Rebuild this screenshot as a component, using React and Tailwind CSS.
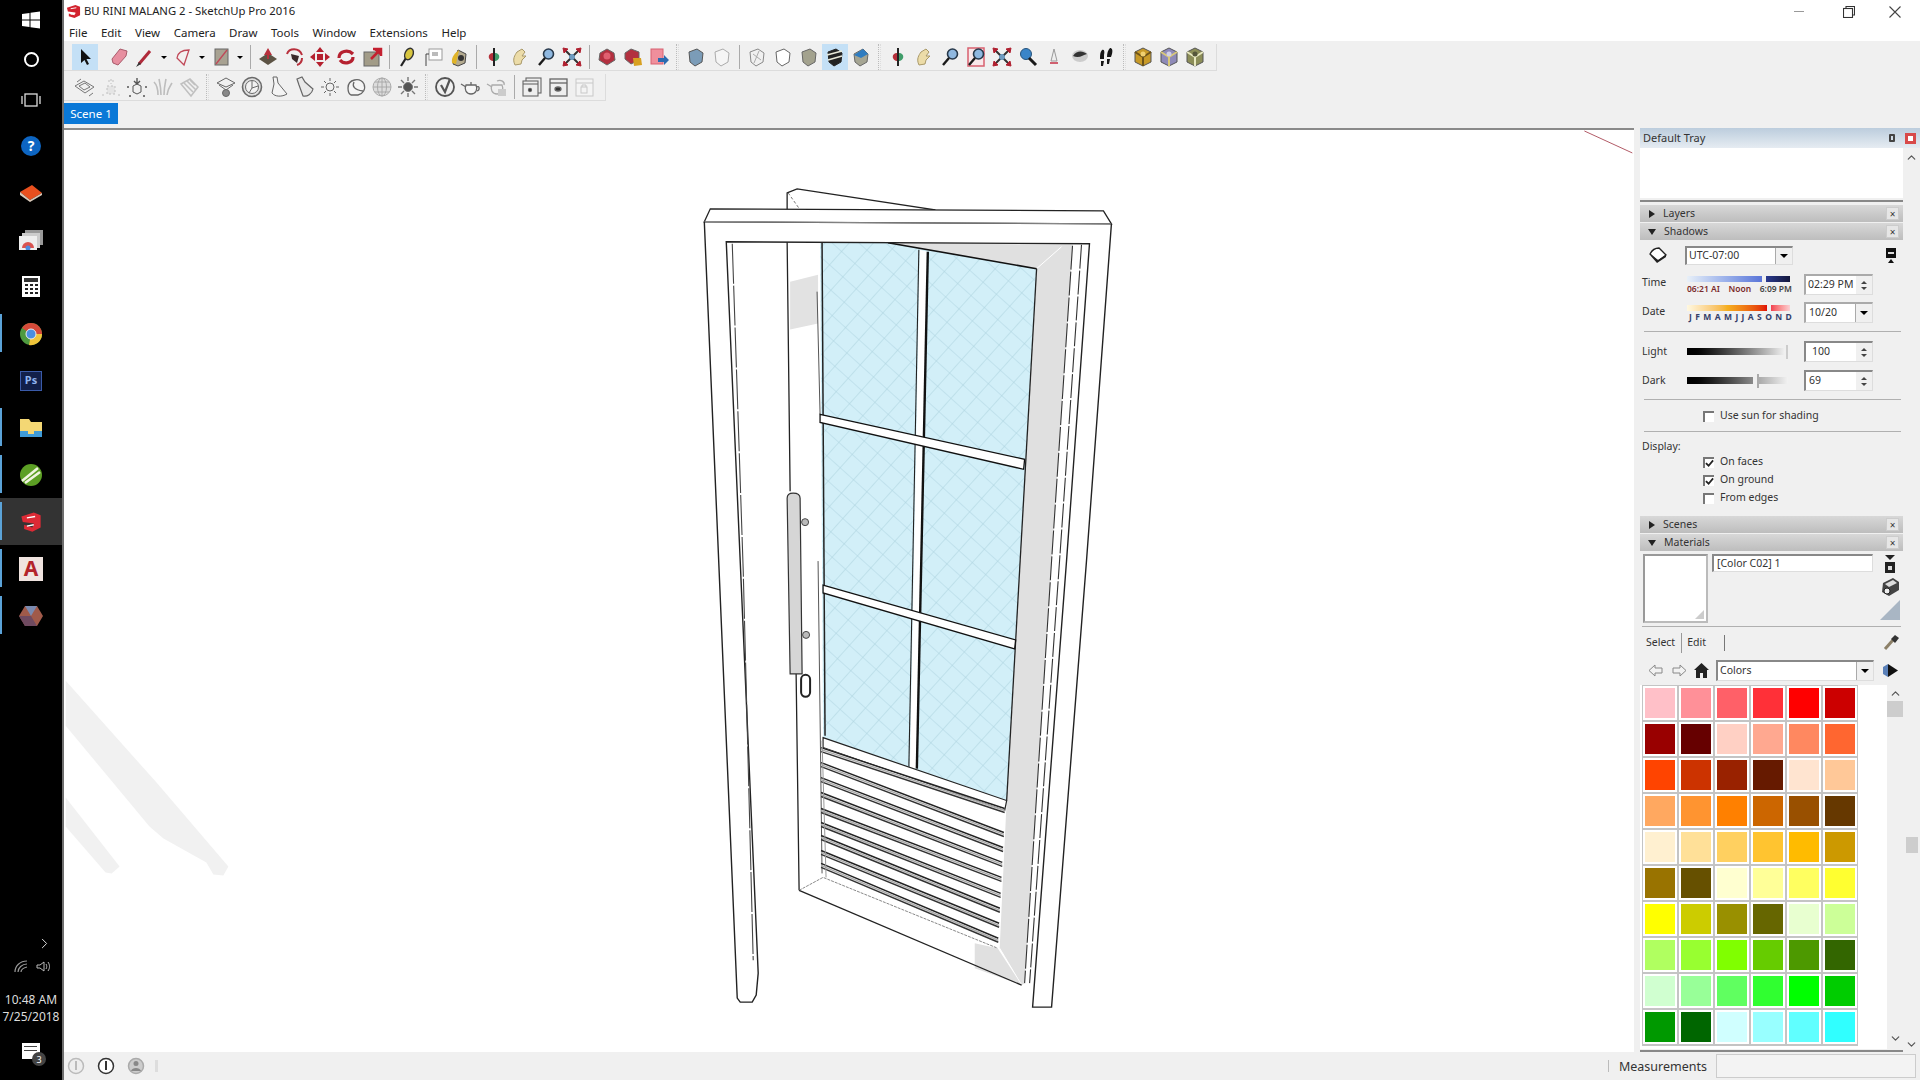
import React from 'react';
import { ChevronUp, ChevronDown, ChevronRight } from 'lucide-react';

const box = (fill, stroke = '#555', extra = null) => (
  <>
    <path d="M4 6 L12 3 L18 7 L17 16 L10 20 L5 16Z" fill={fill} stroke={stroke} />
    {extra}
  </>
);

const orbitIcon = (
  <>
    <path d="M11 7 C4 6 4 15 11 15Z" fill="#b5303a" />
    <path d="M11 7 C18 6 18 15 11 15Z" fill="#3f9d6a" />
    <path d="M11 2 V20" stroke="#222" strokeWidth="2" />
  </>
);
const panIcon = <path d="M6 19 C3 13 6 9 8 6 L13 3 L16 6 L13 10 L17 10 L13 14 L12 18 Z" fill="#ecdca8" stroke="#a89868" />;
const zoomIcon = (
  <>
    <circle cx="13.5" cy="8" r="5" fill="#8fb8e0" stroke="#27384a" strokeWidth="1.6" />
    <path d="M10 12 L4 19" stroke="#1a1a1a" strokeWidth="2.4" />
  </>
);
const extentsIcon = (
  <>
    <rect x="8" y="8" width="6" height="6" fill="#6f9cc0" />
    <path d="M3 3 L9 9 M19 3 L13 9 M3 19 L9 13 M19 19 L13 13" stroke="#333" strokeWidth="2" />
    <path d="M2 2 L7 3 L3 7Z M20 2 L15 3 L19 7Z M2 20 L7 19 L3 15Z M20 20 L15 19 L19 15Z" fill="#b02030" stroke="#b02030" />
  </>
);
const hexCube = (a, b, c) => (
  <>
    <path d="M11 2 L19 6 L19 16 L11 20 L3 16 L3 6Z" fill={a} stroke="#555" />
    <path d="M11 11 L19 6 M11 11 L3 6 M11 11 V20" stroke={b} strokeWidth="2" />
    <circle cx="11" cy="8" r="2.5" fill={c} />
  </>
);

const icons = {
  select: <path d="M7 3 L7 17 L10.5 14 L13 19 L15 18 L12.5 13 L17 13 Z" fill="#111" />,
  eraser: <path d="M4 13 L12 3 L19 5 L18 10 L10 19 L5 17Z" fill="#e78fa0" stroke="#a85a6a" />,
  pencil: <><path d="M5 18 L16 5" stroke="#b02a3a" strokeWidth="3" /><path d="M2 21 L5 16 L7 18Z" fill="#333" /></>,
  arc: <path d="M5 12 Q6 4 17 4 L12 19 Z" fill="#f4f0f0" stroke="#c04858" strokeWidth="1.3" />,
  shape: <><rect x="5" y="3" width="13" height="16" fill="#a8a292" stroke="#666" /><path d="M6 18 L17 4" stroke="#c04858" strokeWidth="1.3" /></>,
  push: <><path d="M2 13 L11 7 L20 13 L11 19Z" fill="#5c5344" /><path d="M11 2 L7 9 L10 9 L10 13 L12 13 L12 9 L15 9Z" fill="#b8303c" /></>,
  follow: <><path d="M4 8 C6 2 16 1 19 9" fill="none" stroke="#b8303c" strokeWidth="2" /><path d="M8 8 L16 10 L14 17 L9 13Z" fill="#3a2a2a" /><path d="M14 19 C17 18 19 15 19 12" fill="none" stroke="#b8303c" strokeWidth="2" /></>,
  move: <path d="M11 1 L15 6 H7Z M11 21 L15 16 H7Z M1 11 L6 7 V15Z M21 11 L16 7 V15Z M8 8 H14 V14 H8Z" fill="#b5202f" />,
  rotate: <><path d="M4 12 C4 5 13 3 18 8" fill="none" stroke="#b5202f" strokeWidth="3.2" /><path d="M18 11 C18 17 9 19 5 14" fill="none" stroke="#b5202f" strokeWidth="3.2" /></>,
  scale: <><rect x="3" y="6" width="15" height="14" fill="#a29c88" stroke="#666" /><path d="M10 13 L18 5 M12 3 H20 V10" stroke="#c42030" strokeWidth="2.5" fill="#c42030" /></>,
  tape: <><path d="M5 20 L10 12" stroke="#222" strokeWidth="2.2" /><ellipse cx="13" cy="8" rx="4" ry="6" transform="rotate(25 13 8)" fill="#d8c640" stroke="#333" strokeWidth="1.4" /></>,
  text: <><rect x="7" y="3" width="13" height="11" fill="#fff" stroke="#999" /><path d="M4 20 L4 8 H7" fill="none" stroke="#444" /><rect x="10" y="6" width="6" height="4" fill="#bbb" /></>,
  paint: <><path d="M5 18 L10 4 L18 8 L17 17 L10 20Z" fill="#b4ab90" stroke="#444" /><path d="M4 17 C3 11 7 7 11 4 L8 18Z" fill="#e0b428" /><circle cx="13" cy="12" r="3" fill="#333" /></>,
  orbit: orbitIcon,
  pan: panIcon,
  zoom: zoomIcon,
  extents: extentsIcon,
  gem: <><path d="M11 3 L18 7 L19 14 L11 19 L3 14 L4 7Z" fill="#b3303f" stroke="#666" /><circle cx="11" cy="10" r="3.5" fill="#e06070" /></>,
  gem2: <><path d="M9 3 L17 6 L17 14 L9 18 L3 13 L3 7Z" fill="#b3303f" stroke="#666" /><path d="M11 12 L19 12 L20 19 L12 20Z" fill="#d8a020" /></>,
  gem3: <><rect x="3" y="3" width="12" height="15" fill="#ef8f9c" stroke="#d86070" /><path d="M10 12 H16 V9 L21 14 L16 19 V16 H10Z" fill="#2a6ab0" /></>,
  solid: box('#7b9cb8', '#555'),
  faint: box('#f5f5f5', '#aaa'),
  wire: box('none', '#888', <path d="M7 8 L15 14 M13 5 L8 17" stroke="#aaa" />),
  hidden: box('#fff', '#666'),
  shaded: box('#a3a28e', '#666'),
  stripes: box('#222', '#222', <><path d="M3 9 L18 5 M4 14 L18 10" stroke="#e8e8d8" strokeWidth="1.6" /></>),
  bluebox: <><path d="M4 8 L13 3 L18 8 L17 16 L10 20 L5 16Z" fill="#a5a593" stroke="#666" /><path d="M4 9 L13 3 L18 8 L11 12Z" fill="#2f7cc0" /></>,
  zoomwin: <><rect x="3" y="2" width="16" height="18" fill="#f8e8ea" stroke="#d8606f" strokeWidth="1.5" />{zoomIcon}</>,
  zoomprev: <><circle cx="9" cy="8" r="5.5" fill="#3a85c8" stroke="#25527a" /><path d="M12 12 L19 19" stroke="#1a1a1a" strokeWidth="3" /></>,
  camera: <><path d="M11 3 L14 15 H8Z" fill="#eee" stroke="#999" /><path d="M7 17 H15" stroke="#d06070" strokeWidth="2" /></>,
  eye: <><ellipse cx="11" cy="10" rx="8" ry="6" fill="#ccc" /><path d="M4 10 C8 4 14 5 18 8 C14 9 10 13 4 10Z" fill="#333" /></>,
  walk: <path d="M7 4 C9 3 10 5 9 9 L9 13 H5 C5 9 5 6 7 4Z M15 2 C17 2 18 4 17 8 L16 11 H12 C12 7 13 4 15 2Z M6 15 H9 L8 20 H6Z M12 13 H15 L14 18 H12Z" fill="#171717" />,
  cubeGold: hexCube('#c89a28', '#6e5418', '#f0d070'),
  cubeBlue: hexCube('#8e8ab8', '#d8c878', '#d0d0e8'),
  cubeOlive: hexCube('#8c8e58', '#e8e8c0', '#55563a'),
  layers: <g fill="none" stroke="#777"><path d="M1 10 L10 5 L20 11 L11 17Z" /><path d="M5 10 L11 7 L16 11 L10 14Z" /><path d="M3 6 L7 3 M19 17 L15 20" /></g>,
  dotted: <g fill="none" stroke="#c0c0c0" strokeDasharray="2 2"><path d="M11 3 L11 8 M8 5 H14" /><rect x="7" y="10" width="8" height="8" fill="#e4e4e4" /><path d="M2 19 H4 M18 19 H20" /></g>,
  dotted2: <g fill="none" stroke="#555"><path d="M11 2 V7 M8 5 L11 8 L14 5" strokeWidth="1.4" /><path d="M7 10 L11 8 L15 10 V16 L11 18 L7 16Z" /><path d="M1 11 H3 M19 11 H21 M3 20 H5 M17 20 H19" strokeWidth="1.6" /></g>,
  grass: <g fill="none" stroke="#bdbdbd" strokeWidth="1.6"><path d="M6 19 C6 12 4 8 2 6 M9 19 C9 12 8 8 7 3 M12 19 C12 12 13 8 14 3 M15 19 C16 12 18 10 20 7" /></g>,
  fins: <g fill="none" stroke="#c0c0c0" strokeWidth="1.5"><path d="M3 8 L12 3 L20 11 L13 20Z" /><path d="M6 7 L15 16 M9 5 L18 14 M12 4 L17 9" /></g>,
  tent: <g fill="none" stroke="#666"><path d="M2 7 L11 2 L20 7 L11 11Z" /><path d="M4 9 L11 14 L18 9" /><circle cx="11" cy="17" r="3.5" fill="#888" /></g>,
  circle: <g fill="none" stroke="#6a6a6a"><circle cx="11" cy="11" r="9.5" fill="#e0e0e0" strokeWidth="1.6" /><circle cx="11" cy="11" r="6.5" fill="#f2f2f2" /><path d="M11 5 V12 L17 10 M11 12 L8 17" /></g>,
  cone: <g fill="none" stroke="#666"><path d="M6 1 H10 L11 7 L20 18 C15 21 8 21 5 17 L7 8Z" fill="#f4f4f4" /></g>,
  torch: <g fill="none" stroke="#666" strokeWidth="1.2"><path d="M4 3 L9 1 L12 6 L20 13 C19 18 14 21 10 20 L6 9Z" fill="#e8e8e8" /></g>,
  sun: <g stroke="#666" fill="none"><circle cx="11" cy="11" r="4" /><path d="M11 2 V5 M11 17 V20 M2 11 H5 M17 11 H20 M5 5 L7 7 M15 15 L17 17 M5 17 L7 15 M15 7 L17 5" /></g>,
  half: <g fill="none" stroke="#666" strokeWidth="1.3"><path d="M3 12 C3 3 15 1 19 8 C21 13 18 18 13 19 H6 C4 18 3 15 3 12Z" fill="#f4f4f4" /><path d="M9 6 C7 10 9 14 18 15" /></g>,
  gridball: <g fill="#ddd" stroke="#aaa"><circle cx="11" cy="11" r="9" /><path d="M2 11 H20 M11 2 V20 M4 6 H18 M4 16 H18" fill="none" /><ellipse cx="11" cy="11" rx="4.5" ry="9" fill="none" /></g>,
  sundark: <g stroke="#777" fill="#555"><circle cx="11" cy="11" r="4.5" /><path d="M11 1 V5 M11 17 V21 M1 11 H5 M17 11 H21 M4 4 L7 7 M15 15 L18 18 M4 18 L7 15 M15 7 L18 4" strokeWidth="1.4" /></g>,
  vray: <g fill="none" stroke="#555" strokeWidth="1.8"><circle cx="11" cy="11" r="9" /><path d="M7 9 L11 16 L16 3" strokeWidth="2.2" /></g>,
  teapot: <g fill="none" stroke="#666" strokeWidth="1.3"><path d="M6 9 H16 C18 13 16 18 11 18 C6 18 4 13 6 9Z" fill="#f6f6f6" /><path d="M6 11 L1 8 M16 11 C20 9 20 14 17 15 M11 6 V9" /></g>,
  teapot2: <g fill="none" stroke="#aaa" strokeWidth="1.3"><path d="M6 9 H16 C18 13 16 18 11 18 C6 18 4 13 6 9Z" /><path d="M6 11 L1 8 M11 5 C15 3 19 6 18 9" /><rect x="12" y="13" width="8" height="7" fill="#ccc" stroke="none" /></g>,
  frames: <g fill="#eee" stroke="#666" strokeWidth="1.1"><rect x="5" y="2" width="15" height="15" /><rect x="2" y="5" width="15" height="15" /><path d="M2 8 H17" /><circle cx="9" cy="14" r="1.6" fill="#333" /></g>,
  frame: <g fill="#eee" stroke="#666" strokeWidth="1.3"><rect x="3" y="3" width="17" height="17" /><path d="M3 7 H20" /><ellipse cx="11" cy="13" rx="3" ry="2" fill="#333" /></g>,
  lock: <g fill="#f4f4f4" stroke="#c8c8c8"><rect x="3" y="3" width="17" height="17" /><path d="M3 7 H20" /><rect x="8" y="11" width="6" height="6" /><path d="M9 11 V9 H13 V11" fill="none" /></g>,
};

const row1 = [
  ['select', 'active'], 8, 'eraser', 'pencil', 'caret', 'arc', 'caret', 'shape', 'caret', 'sep', 'push', 'follow', 'move', 'rotate', 'scale', 'sep',
  'tape', 'text', 'paint', 'sep', 'orbit', 'pan', 'zoom', 'extents', 'sep', 'gem', 'gem2', 'gem3', 'grip', 'solid', 'faint', 'sep',
  'wire', 'hidden', 'shaded', ['stripes', 'active'], 'bluebox', 'grip', 'orbit', 'pan', 'zoom', 'zoomwin', 'extents', 'zoomprev', 'camera', 'eye', 'walk', 'grip',
  'cubeGold', 'cubeBlue', 'cubeOlive',
];
const row2 = [
  'layers', 'dotted', 'dotted2', 'grass', 'fins', 'grip', 'tent', 'circle', 'cone', 'torch', 'sun', 'half', 'gridball', 'sundark', 'grip',
  'vray', 'teapot', 'teapot2', 'sep', 'frames', 'frame', 'lock',
];

const Toolbar = ({ items, className }) => (
  <div className={`flex h-[27px] w-fit items-center pl-2 pr-2 border-b border-r border-[#dcdcdc] ${className}`}>
    {items.map((item, i) => {
      if (typeof item === 'number') return <div key={i} className="w-2" />;
      if (item === 'caret') return <div key={i} className="flex w-[12px] justify-center"><div className="border-x-[3px] border-t-[3px] border-x-transparent border-t-black" /></div>;
      if (item === 'sep') return <div key={i} className="mx-1 h-[24px] w-px bg-[#aaa]" />;
      if (item === 'grip') return <div key={i} className="mx-1 h-[26px] w-[3px] border-l border-r border-dotted border-l-[#bbb] border-r-[#ddd]" />;
      const [name, active] = Array.isArray(item) ? item : [item, false];
      return (
        <div key={i} className={`flex h-[26px] w-[26px] items-center justify-center ${active ? 'bg-[#c4e0f6]' : ''}`}>
          <svg width="22" height="22" viewBox="0 0 22 22" className="blur-[0.4px]">{icons[name]}</svg>
        </div>
      );
    })}
  </div>
);

const menus = ['File', 'Edit', 'View', 'Camera', 'Draw', 'Tools', 'Window', 'Extensions', 'Help'];

const LogoSU = ({ size = 16 }) => (
  <svg width={size} height={size} viewBox="0 0 16 16">
    <path d="M1 4 L10 1 L15 3 L15 12 L9 15 L3 13 L3 10 L9 12 L10 9 L2 8Z" fill="#d3232e" />
    <path d="M5 5 L11 4 M5 11 L10 10" stroke="#fff" strokeWidth="1" />
  </svg>
);

const TaskIcon = ({ active, running, children }) => (
  <div className={`relative flex h-[47px] items-center justify-center ${active ? 'bg-[#333]' : ''}`}>
    {running && <div className="absolute left-0 top-1 h-[38px] w-[2px] bg-[#5ba3d8]" />}
    {children}
  </div>
);

const Taskbar = () => (
  <div className="flex h-full w-[64px] shrink-0 flex-col border-r-2 border-[#6e6e6e] bg-black pr-0 text-white">
    <div className="flex h-[40px] items-center justify-center">
      <svg width="18" height="18" viewBox="0 0 18 18"><path d="M0 3 L7.5 2 V8.5 H0Z M8.5 1.8 L18 0.5 V8.5 H8.5Z M0 9.5 H7.5 V16 L0 15Z M8.5 9.5 H18 V17.5 L8.5 16.2Z" fill="#fff" /></svg>
    </div>
    <div className="flex h-[39px] items-center justify-center">
      <div className="h-[15px] w-[15px] rounded-full border-2 border-white" />
    </div>
    <div className="mb-[2px] flex h-[41px] items-center justify-center">
      <svg width="20" height="16" viewBox="0 0 20 16" fill="none" stroke="#ddd" strokeWidth="1.3"><rect x="4" y="2" width="12" height="12" /><path d="M1 4 V12 M19 4 V12" /></svg>
    </div>
    <TaskIcon>
      <div className="flex h-[20px] w-[20px] items-center justify-center rounded-full bg-[#0d65c2] text-[14px] font-bold leading-none">?</div>
    </TaskIcon>
    <TaskIcon>
      <svg width="24" height="18" viewBox="0 0 24 18"><path d="M1 8 L13 1 L23 9 L11 16Z" fill="#e8501e" /><path d="M1 8 L11 16 L23 9 V11 L11 18 L1 11Z" fill="#d8c8b8" /></svg>
    </TaskIcon>
    <TaskIcon>
      <svg width="24" height="20" viewBox="0 0 24 20"><rect x="6" y="0" width="18" height="15" fill="#999" /><rect x="3" y="3" width="18" height="15" fill="#ccc" /><rect x="0" y="6" width="18" height="14" fill="#eee" /><path d="M3 18 A6 6 0 0 1 15 18Z" fill="#d9534f" /><circle cx="9" cy="18" r="2.5" fill="#4a8be0" /></svg>
    </TaskIcon>
    <TaskIcon>
      <svg width="18" height="21" viewBox="0 0 18 21"><rect width="18" height="21" fill="#fff" /><rect x="2" y="2" width="14" height="4" fill="#333" /><path d="M3 9 H6 M8 9 H11 M13 9 H16 M3 13 H6 M8 13 H11 M13 13 H16 M3 17 H6 M8 17 H11 M13 17 H16" stroke="#222" strokeWidth="2" /></svg>
    </TaskIcon>
    <TaskIcon running>
      <svg width="24" height="24" viewBox="0 0 24 24"><circle cx="12" cy="12" r="11" fill="#4e9a3f" /><path d="M12 1 A11 11 0 0 1 23 12 L12 12 L3 6 A11 11 0 0 1 12 1Z" fill="#d64a3a" /><path d="M23 12 A11 11 0 0 1 10 23 L12 12Z" fill="#f0c43a" /><circle cx="12" cy="12" r="5" fill="#4a8fe0" stroke="#eee" /></svg>
    </TaskIcon>
    <TaskIcon>
      <div className="flex h-[20px] w-[22px] items-center justify-center border border-[#3a5aa8] bg-[#12204a] text-[11px] font-bold text-[#8fb4f0]">Ps</div>
    </TaskIcon>
    <TaskIcon running>
      <svg width="22" height="18" viewBox="0 0 22 18"><path d="M0 0 H9 L11 3 H22 V18 H0Z" fill="#f4d774" /><rect x="0" y="12" width="22" height="6" fill="#3f9bd8" /><rect x="8" y="9" width="6" height="6" fill="#f4d774" /></svg>
    </TaskIcon>
    <TaskIcon running>
      <svg width="24" height="24" viewBox="0 0 24 24"><circle cx="12" cy="12" r="11" fill="#5c9f24" /><path d="M3 18 L19 5 M6 20 L21 9" stroke="#f0f4e0" strokeWidth="2.5" /></svg>
    </TaskIcon>
    <TaskIcon running active>
      <svg width="22" height="22" viewBox="0 0 16 16"><path d="M1 4 L10 1 L15 3 L15 12 L9 15 L3 13 L3 10 L9 12 L10 9 L2 8Z" fill="#dc2a35" /><path d="M5 5 L11 4 M5 11 L10 10" stroke="#fff" strokeWidth="1" /></svg>
    </TaskIcon>
    <TaskIcon running>
      <div className="flex h-[24px] w-[24px] items-center justify-center bg-[#f0e4e0] text-[21px] font-bold leading-none text-[#b3232a]">A</div>
    </TaskIcon>
    <TaskIcon running>
      <svg width="24" height="22" viewBox="0 0 24 22"><path d="M6 1 H18 L24 11 L18 21 H6 L0 11Z" fill="#a05a4a" /><path d="M6 1 H18 L12 11Z" fill="#7a8ab0" /><path d="M0 11 L6 21 H18 L12 11Z" fill="#6f4a60" /></svg>
    </TaskIcon>
    <div className="mt-auto flex flex-col items-center">
      <div className="flex w-full justify-end pr-[9px]"><ChevronRight size={17} strokeWidth={1.4} color="#ddd" /></div>
      <div className="mt-[8px] flex items-center gap-[8px] pl-[2px]">
        <svg width="14" height="13" viewBox="0 0 14 13" fill="none" stroke="#999" strokeWidth="1.2"><path d="M1 12 C1 6 6 1 13 1 M4 12 C4 8 8 4 13 4 M7 12 C7 10 9 8 13 7" /></svg>
        <svg width="14" height="13" viewBox="0 0 14 13" fill="none" stroke="#bbb"><path d="M1 5 H4 L8 2 V11 L4 8 H1Z" /><path d="M10 4 C11 6 11 7 10 9 M12 2 C14 5 14 8 12 11" /></svg>
      </div>
      <div className="mt-[18px] text-[12px] leading-[17px] text-[#ddd]">10:48 AM</div>
      <div className="text-[12px] leading-[17px] text-[#ddd]">7/25/2018</div>
      <div className="relative mb-[21px] mt-[18px] h-[16px] w-[18px] bg-white">
        <div className="ml-[2px] mt-[3px] h-[1px] w-[13px] bg-[#444]" />
        <div className="ml-[2px] mt-[3px] h-[1px] w-[13px] bg-[#444]" />
        <div className="absolute -bottom-[7px] -right-[6px] flex h-[14px] w-[14px] items-center justify-center rounded-full bg-[#444] text-[9px] leading-none">3</div>
      </div>
    </div>
  </div>
);

const TitleBar = () => (
  <div className="flex h-[22px] items-center pl-[2px] pt-[1px] text-[11.3px] text-[#222]">
    <LogoSU size={15} />
    <span className="ml-[3px]">BU RINI MALANG 2 - SketchUp Pro 2016</span>
    <div className="ml-auto flex items-center">
      <div className="mr-[39px] h-px w-[10px] bg-[#999]" />
      <svg width="12" height="12" viewBox="0 0 12 12" fill="none" stroke="#333" strokeWidth="1.1" className="mr-[34px]"><rect x="0.5" y="2.5" width="9" height="9" /><path d="M3 2.5 V0.5 H11.5 V9 H9.5" /></svg>
      <svg width="12" height="12" viewBox="0 0 12 12" stroke="#444" strokeWidth="1.1" className="mr-[19px]"><path d="M0.5 0.5 L11.5 11.5 M11.5 0.5 L0.5 11.5" /></svg>
    </div>
  </div>
);

const Door = () => (
  <svg viewBox="64 128 1570 924" className="block h-full w-full">
    <defs>
      <pattern id="hatch" width="18" height="18" patternUnits="userSpaceOnUse" patternTransform="rotate(42)">
        <rect width="18" height="18" fill="#d2eff8" />
        <path d="M0 0 H18 M0 0 V18" stroke="#aed4e0" strokeWidth="1.1" />
      </pattern>
    </defs>
    {/* ghost shadow at the left edge */}
    <g fill="#f1f1f1">
      <path d="M64 680 L155 782 L227 866 L222 875 L212 874 L205 862 L162 838 L148 826 L64 725Z" />
      <path d="M64 797 L118 866 L110 873 L104 872 L64 826Z" />
    </g>
    <path d="M1586 129 L1634 151" stroke="#b25a66" strokeWidth="1" />

    {/* door leaf */}
    <path d="M787 191 L797 187 L935 208 L935 222 L787 222Z" fill="#fff" stroke="#222" strokeWidth="1.3" />
    <path d="M788 191 L800 208 L900 222" fill="none" stroke="#777" strokeDasharray="3 2" />
    <path d="M787 240 L790 490 M796 673 L799 890" stroke="#222" strokeWidth="1.3" />

    {/* reveal and shadow */}
    <path d="M790 280 L818 273 L818 322 L790 328Z" fill="#e2e2e2" />
    <path d="M888 241 L1073 243 L1052 560 L1025 983 L1022 985 L1000 948 L1007 800 L1037 267Z" fill="#e0e0e0" />
    <path d="M1037 267 L1062 245" stroke="#fff" strokeWidth="1" />
    <path d="M1000 948 L1022 985" stroke="#fff" strokeWidth="1" />

    {/* glass */}
    <path d="M820 241 L888 241 L1037 267 L1007 800 L823 737Z" fill="url(#hatch)" />
    <path d="M888 241 L1037 267" stroke="#111" strokeWidth="1.6" />
    <path d="M822 241 L825 735" stroke="#222" strokeWidth="1.5" />
    <path d="M1037 267 L1007 800" stroke="#222" strokeWidth="1.3" />
    <path d="M817 290 L820 413 M818 560 L822 873" stroke="#555" strokeWidth="1" />

    {/* muntins */}
    <path d="M920 248 L928 250 L917 768 L910 767Z" fill="#fff" />
    <path d="M919 248 L909 766" stroke="#222" strokeWidth="1.1" />
    <path d="M928 250 L917 768" stroke="#111" strokeWidth="2.4" />
    <path d="M820 413 L1025 458 L1024 468 L820 421Z" fill="#fff" stroke="#111" strokeWidth="1.3" />
    <path d="M823 584 L1016 639 L1015 648 L823 592Z" fill="#fff" stroke="#111" strokeWidth="1.3" />
    <path d="M823 737 L1007 800 L1005 810 L823 747Z" fill="#fff" stroke="#222" strokeWidth="1.2" />

    {/* louvers */}
    <path d="M823 747 L1005 810 L998 948 L823 877Z" fill="#fff" />
    <g fill="none">
      {[[747, 808], [762, 832], [777, 847], [792, 862], [808, 877], [822, 893], [835, 908], [850, 923], [863, 938]].map(([a, b], i) => (
        <g key={i}>
          <path d={`M821 ${a} L${1005 - i * 0.8} ${b}`} strokeWidth="1.5" stroke="#222" />
          <path d={`M821 ${a + 2} L${1005 - i * 0.8} ${b + 2}`} strokeWidth="1.4" stroke="#aaa" />
          <path d={`M821 ${a + 4} L${1005 - i * 0.8} ${b + 4}`} strokeWidth="1.5" stroke="#333" />
        </g>
      ))}
    </g>
    <path d="M822 740 L826 877" stroke="#999" strokeWidth="1" />

    {/* sill */}
    <path d="M975 943 L998 948 L1022 985 L975 968Z" fill="#e0e0e0" />
    <path d="M799 890 L823 877 L998 948" fill="none" stroke="#888" strokeDasharray="3 1" />
    <path d="M799 890 L1022 985" stroke="#222" strokeWidth="1.3" />

    {/* frame */}
    <path d="M704 220 L1112 222 L1090 242 L726 240Z" fill="#fff" />
    <path d="M704 220 L710 207 L1104 209 L1112 222 Z" fill="#fff" stroke="#222" strokeWidth="1.3" />
    <path d="M704 220 L1112 222" stroke="#888" strokeWidth="1" />
    <path d="M704 220 L737 998 L740 1002 L752 1002 L756 995 L758 973 L726 240 L1090 242 L1067 560 L1033 1007 L1052 1007 L1087 560 L1112 222" fill="none" stroke="#222" strokeWidth="1.4" />
    <path d="M732 242 L743 570 L753 960" fill="none" stroke="#444" strokeWidth="1.1" strokeDasharray="40 2" />
    <path d="M1073 244 L1052 560 L1025 983 M1082 243 L1060 560 L1030 983" fill="none" stroke="#333" strokeWidth="1.1" strokeDasharray="24 2" />

    {/* handle and lock */}
    <path d="M787 497 Q787 492 793 492 Q800 492 800 497 L802 673 L790 673Z" fill="#d6d6d6" stroke="#333" strokeWidth="1.2" />
    <circle cx="805" cy="521" r="3.5" fill="#bbb" stroke="#444" />
    <circle cx="806" cy="634" r="3.5" fill="#bbb" stroke="#444" />
    <rect x="801" y="674" width="9" height="22" rx="4.5" fill="#fff" stroke="#222" strokeWidth="2" />
  </svg>
);

const TrayHeader = ({ title, open }) => (
  <div className="mt-px flex h-[17px] items-center bg-gradient-to-b from-[#d8d8d8] to-[#bdbdbd] pl-[8px] pr-[4px] text-[10.5px] text-[#333]">
    <div className={open ? 'border-x-[4px] border-t-[6px] border-x-transparent border-t-[#222]' : 'ml-[1px] border-y-[4px] border-l-[6px] border-y-transparent border-l-[#222]'} />
    <span className="ml-[8px]">{title}</span>
    <div className="ml-auto flex h-[13px] w-[13px] items-center justify-center border border-[#ccc] bg-[#e6e6e6] text-[10px] leading-none text-[#333]">×</div>
  </div>
);

const Sunken = ({ className, children }) => (
  <div className={`flex items-center border-b border-l-2 border-r border-t-2 border-b-[#ddd] border-l-[#888] border-r-[#ddd] border-t-[#888] bg-white text-[10.5px] text-[#333] ${className}`}>
    {children}
  </div>
);

const Spin = () => (
  <div className="ml-auto flex h-full w-[16px] flex-col items-center justify-center gap-[3px] bg-[#f0f0f0]">
    <div className="border-x-[3px] border-b-[3px] border-x-transparent border-b-[#444]" />
    <div className="border-x-[3px] border-t-[3px] border-x-transparent border-t-[#444]" />
  </div>
);

const Drop = () => (
  <div className="ml-auto flex h-full w-[17px] items-center justify-center border-l border-[#aaa] bg-[#f0f0f0]">
    <div className="border-x-[4px] border-t-[4px] border-x-transparent border-t-black" />
  </div>
);

const Check = ({ checked, label, className = '' }) => (
  <div className={`flex items-center pl-[61px] text-[10.5px] text-[#333] ${className}`}>
    <div className="flex h-[11px] w-[11px] items-center justify-center border-l-2 border-t-2 border-l-[#777] border-t-[#777] bg-white">
      {checked && <svg width="10" height="9" viewBox="0 0 10 9" fill="none" stroke="#222" strokeWidth="2"><path d="M1 4 L4 7 L9 1" /></svg>}
    </div>
    <span className="ml-[6px]">{label}</span>
  </div>
);

const Rule = ({ className }) => <div className={`mx-[2px] h-px bg-[#b0b0b0] ${className}`} />;

const swatches = [
  ['#ffc0c8', '#ff9098', '#ff6068', '#ff3038', '#ff0000', '#cc0000'],
  ['#990000', '#660000', '#ffd0c4', '#ffa890', '#ff8860', '#ff6630'],
  ['#ff4400', '#cc3300', '#992200', '#661a00', '#ffe4d0', '#ffc898'],
  ['#ffa860', '#ff9430', '#ff8000', '#cc6600', '#995000', '#663800'],
  ['#fff0d0', '#ffe098', '#ffd060', '#ffc430', '#ffbb00', '#cc9900'],
  ['#997300', '#665000', '#ffffd0', '#ffff98', '#ffff60', '#ffff30'],
  ['#ffff00', '#cccc00', '#999000', '#666600', '#e8ffd0', '#ccff98'],
  ['#b0ff60', '#98ff30', '#80ff00', '#66cc00', '#4d9900', '#336600'],
  ['#d0ffd0', '#98ff98', '#60ff60', '#30ff30', '#00ff00', '#00cc00'],
  ['#009900', '#006600', '#d0ffff', '#98ffff', '#60ffff', '#30ffff'],
];

const ShadowsPanel = () => (
  <div className="h-[275px] pl-[2px]">
    <div className="mt-[6px] flex h-[19px] items-center">
      <div className="ml-[6px] flex h-[19px] w-[20px] items-center justify-center">
        <svg width="20" height="18" viewBox="0 0 20 18"><path d="M2 7 C4 3 8 1 11 1 L18 8 L10 14Z" fill="#fff" stroke="#222" strokeWidth="1.3" /><path d="M2 8 L9 16 L18 10 L18 8 L10 13Z" fill="#222" /></svg>
      </div>
      <Sunken className="ml-[17px] h-[19px] w-[108px] pl-[2px]">UTC-07:00<Drop /></Sunken>
      <svg width="12" height="16" viewBox="0 0 12 16" className="ml-[92px]"><rect x="1" y="0" width="10" height="10" fill="#111" /><rect x="3" y="4" width="6" height="2" fill="#ddd" /><path d="M3 15 L6 11 L9 15Z" fill="#111" /></svg>
    </div>
    <div className="mt-[9px] flex h-[21px] items-start">
      <span className="mt-[2px] w-[45px] text-[10.5px] leading-[12px] text-[#333]">Time</span>
      <div className="w-[105px] pt-[2px]">
        <div className="flex h-[6px] gap-[4px]">
          <div className="w-[75px] bg-gradient-to-r from-[#e8f0f8] to-[#5a74d8]" />
          <div className="w-[24px] bg-gradient-to-r from-[#2a3a90] to-[#14183c]" />
        </div>
        <div className="mt-[2px] flex justify-between whitespace-nowrap text-[8.5px] font-semibold leading-[10px]">
          <span className="text-[#7a2a2a]">06:21 AI</span>
          <span className="text-[#7a2a2a]">Noon</span>
          <span className="text-[#444]">6:09 PM</span>
        </div>
      </div>
      <Sunken className="ml-[12px] h-[21px] w-[69px] pl-[2px] !border-l-[#aaa] !border-t-[#aaa]">02:29 PM<Spin /></Sunken>
    </div>
    <div className="mt-[7px] flex h-[21px] items-start">
      <span className="mt-[3px] w-[45px] text-[10.5px] leading-[12px] text-[#333]">Date</span>
      <div className="w-[105px] pt-[3px]">
        <div className="flex h-[6px] gap-[4px]">
          <div className="w-[80px] bg-gradient-to-r from-[#fff8e0] via-[#f5b020] to-[#e00808]" />
          <div className="w-[19px] bg-gradient-to-r from-[#f04050] to-[#fad0d4]" />
        </div>
        <div className="mt-[1px] flex justify-between pl-[2px] text-[8.5px] font-bold leading-[10px] text-[#35406a]">
          {'JFMAMJJASOND'.split('').map((c, i) => <span key={i}>{c}</span>)}
        </div>
      </div>
      <Sunken className="ml-[12px] h-[21px] w-[69px] pl-[3px] !border-l-[#aaa] !border-t-[#aaa]">10/20<Drop /></Sunken>
    </div>
    <Rule className="mt-[8px]" />
    <div className="mt-[9px] flex h-[21px] items-center">
      <span className="w-[45px] text-[10.5px] text-[#333]">Light</span>
      <div className="h-[7px] w-[98px] bg-gradient-to-r from-black to-[#f2f2f2]" />
      <div className="ml-[1px] h-[14px] w-[2px] bg-[#ccc]" />
      <Sunken className="ml-[16px] h-[21px] w-[69px] pl-[6px]">100<Spin /></Sunken>
    </div>
    <div className="mt-[8px] flex h-[21px] items-center">
      <span className="w-[45px] text-[10.5px] text-[#333]">Dark</span>
      <div className="h-[7px] w-[66px] bg-gradient-to-r from-black to-[#8a8a8a]" />
      <div className="ml-[4px] h-[14px] w-[2px] bg-[#aaa]" />
      <div className="h-[7px] w-[29px] bg-gradient-to-r from-[#aaa] to-[#f2f2f2]" />
      <Sunken className="ml-[16px] h-[21px] w-[69px] pl-[3px]">69<Spin /></Sunken>
    </div>
    <Rule className="mt-[8px]" />
    <Check label="Use sun for shading" className="mt-[8px] h-[16px]" />
    <Rule className="mt-[7px]" />
    <div className="mt-[7px] h-[14px] text-[10.5px] leading-[14px] text-[#333]">Display:</div>
    <Check checked label="On faces" className="h-[18px]" />
    <Check checked label="On ground" className="h-[18px]" />
    <Check label="From edges" className="h-[18px]" />
  </div>
);

const MaterialsPanel = () => (
  <div className="flex min-h-0 flex-1 flex-col">
    <div className="mt-[3px] flex h-[69px] pl-[3px]">
      <div className="relative h-[69px] w-[65px] border-b-2 border-l-2 border-r-2 border-t-2 border-b-[#bbb] border-l-[#999] border-r-[#bbb] border-t-[#999] bg-white">
        <div className="absolute bottom-[2px] right-[2px] h-0 w-0 border-b-[9px] border-l-[9px] border-b-[#ccc] border-l-transparent" />
      </div>
      <Sunken className="ml-[4px] h-[18px] w-[161px] pl-[3px]">[Color C02] 1</Sunken>
      <div className="flex flex-col items-center pl-[6px]">
        <svg width="14" height="19" viewBox="0 0 14 19" className="mt-[1px]"><path d="M2 0 H12 L7 5Z" fill="#222" /><rect x="2" y="7" width="10" height="11" fill="#222" /><rect x="5" y="11" width="4" height="4" fill="#ddd" /></svg>
        <svg width="20" height="20" viewBox="0 0 20 20" className="mt-[3px]"><path d="M3 6 L13 1 L19 5 V13 L9 19 L2 15Z" fill="#444" /><path d="M5 7 L13 3 L17 6 L9 10Z" fill="#ddd" /><circle cx="7" cy="14" r="3" fill="#eee" stroke="#222" /></svg>
        <div className="ml-[1px] mt-[3px] h-0 w-0 border-b-[20px] border-l-[20px] border-b-[#a9b6c4] border-l-transparent" />
      </div>
    </div>
    <Rule className="mt-[3px]" />
    <div className="mt-[3px] flex h-[26px] items-center pl-[6px] text-[10.5px] text-[#333]">
      <span>Select</span>
      <div className="ml-[6px] h-[20px] w-px bg-[#999]" />
      <span className="ml-[5px]">Edit</span>
      <div className="ml-[18px] h-[16px] w-px bg-[#777]" />
      <svg width="18" height="18" viewBox="0 0 18 18" className="ml-[157px]"><path d="M3 15 L11 6" stroke="#8c8068" strokeWidth="3" /><path d="M9 5 L13 1 L17 4 L13 9Z" fill="#333" /></svg>
    </div>
    <div className="mt-[4px] flex h-[21px] items-center pl-[8px]">
      <svg width="15" height="13" viewBox="0 0 15 13" fill="#f2f2f2" stroke="#888"><path d="M1 6.5 L7 1 V4 H14 V9 H7 V12Z" /></svg>
      <svg width="15" height="13" viewBox="0 0 15 13" fill="#f2f2f2" stroke="#888" className="ml-[9px]"><path d="M14 6.5 L8 1 V4 H1 V9 H8 V12Z" /></svg>
      <svg width="15" height="15" viewBox="0 0 15 15" className="ml-[7px]"><path d="M0 7 L7.5 0 L15 7 H13 V15 H9 V10 H6 V15 H2 V7Z" fill="#222" /></svg>
      <Sunken className="ml-[7px] h-[21px] w-[158px] pl-[2px]">Colors<Drop /></Sunken>
      <svg width="17" height="15" viewBox="0 0 17 15" className="ml-[8px]"><path d="M1 4 L6 1 V14 L1 11Z" fill="#5a80b8" /><path d="M6 1 L16 7.5 L6 14Z" fill="#111" /></svg>
    </div>
    <div className="mt-[4px] flex h-[364px] overflow-hidden bg-white pl-[2px]">
      <div className="w-[216px] shrink-0">
        {swatches.map((row, r) => (
          <div key={r} className="flex h-[36px]">
            {row.map((c) => (
              <div key={c} className="h-[36px] w-[36px] border border-[#c4c4c4] p-[2px]">
                <div className="h-full w-full" style={{ backgroundColor: c }} />
              </div>
            ))}
          </div>
        ))}
        <div className="h-px w-full bg-[#c4c4c4]" />
      </div>
      <div className="ml-[29px] flex h-full w-[16px] flex-col items-center bg-[#f0f0f0]">
        <ChevronUp size={13} strokeWidth={2.2} color="#555" className="mt-[2px]" />
        <div className="mt-[1px] h-[16px] w-full bg-[#cdcdcd]" />
        <ChevronDown size={13} strokeWidth={2.2} color="#555" className="mb-[4px] mt-auto" />
      </div>
    </div>
    <div className="mt-[1px] h-[2px] bg-[#888]" />
  </div>
);

const Tray = () => (
  <div className="flex h-full w-[280px] shrink-0 flex-col bg-[#f0f0f0]">
    <div className="flex h-[20px] items-center bg-gradient-to-b from-[#bccddd] to-[#e6ecf2] pl-[3px] pr-[4px] text-[11px] text-[#333]">
      Default Tray
      <div className="ml-auto h-[8px] w-[6px] rounded-[1px] border-2 border-[#444]" />
      <div className="ml-[10px] flex h-[11px] w-[11px] items-center justify-center bg-[#d84a4a]">
        <div className="h-[5px] w-[5px] bg-white" />
      </div>
    </div>
    <div className="flex min-h-0 flex-1">
      <div className="flex w-[263px] flex-col">
        <div className="h-[50px] bg-white" />
        <div className="mt-[2px] h-[2px] bg-[#888]" />
        <div className="h-[2px]" />
        <TrayHeader title="Layers" />
        <TrayHeader title="Shadows" open />
        <ShadowsPanel />
        <TrayHeader title="Scenes" />
        <TrayHeader title="Materials" open />
        <MaterialsPanel />
      </div>
      <div className="flex w-[17px] flex-col items-center">
        <ChevronUp size={13} strokeWidth={2.2} color="#555" className="mt-[3px]" />
        <div className="mt-[673px] h-[16px] w-[12px] bg-[#cdcdcd]" />
        <ChevronDown size={13} strokeWidth={2.2} color="#555" className="mb-[1px] mt-auto" />
      </div>
    </div>
  </div>
);

const StatusBar = () => (
  <div className="flex h-[28px] items-center bg-[#f0f0f0] pl-[3px]">
    {[
      ['#bbb', '#eee'],
      ['#333', '#fff'],
      ['#aaa', '#ccc'],
    ].map(([s, f], i) => (
      <svg key={i} width="18" height="18" viewBox="0 0 18 18" className={i ? 'ml-[12px]' : ''}>
        <circle cx="9" cy="9" r="7.5" fill={f} stroke={s} strokeWidth="1.5" />
        {i === 2 ? <path d="M4 14 C5 10 13 10 14 14 M9 9 A2.5 2.5 0 1 0 9 4 A2.5 2.5 0 1 0 9 9" fill="#888" stroke="none" /> : <rect x="8" y="4" width="2" height="9" fill={s} />}
      </svg>
    ))}
    <div className="ml-[10px] h-[12px] w-[3px] bg-[#ddd]" />
    <div className="ml-auto h-[12px] w-px bg-[#bbb]" />
    <span className="ml-[10px] pt-[2px] text-[12.5px] text-[#333]">Measurements</span>
    <div className="ml-[9px] mr-[4px] h-[24px] w-[200px] border border-[#ccc] bg-[#f3f3f3]" />
  </div>
);

const App = () => (
  <div className="flex h-[1080px] w-[1920px] overflow-hidden bg-white font-['Noto_Sans',sans-serif]">
    <Taskbar />
    <div className="flex min-w-0 flex-1 flex-col">
      <div className="h-[41px] bg-white">
        <TitleBar />
        <div className="flex h-[19px] items-center gap-[13.5px] pl-[5px] pt-[2px] text-[11.5px] text-[#222]">
          {menus.map((m) => <span key={m}>{m}</span>)}
        </div>
      </div>
      <div className="h-[87px] bg-[#f0f0f0] pt-[3px]">
        <Toolbar items={row1} />
        <Toolbar items={row2} className="mt-[3px]" />
        <div className="mt-[2px] flex h-[21px] w-[54px] items-center justify-center bg-[#0a78d7] text-[11.5px] text-white">Scene 1</div>
      </div>
      <div className="flex min-h-0 flex-1">
        <div className="min-w-0 flex-1 border-t-2 border-[#8a8a8a] bg-white">
          <Door />
        </div>
        <div className="w-[6px] bg-[#f0f0f0]" />
        <Tray />
      </div>
      <StatusBar />
    </div>
  </div>
);

export default App;
